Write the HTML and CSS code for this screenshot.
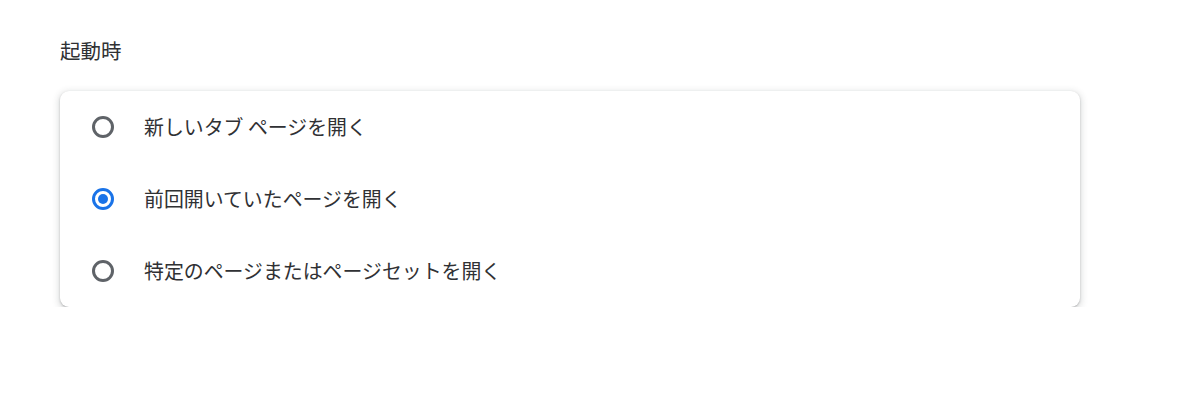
FILE: index.html
```html
<!DOCTYPE html>
<html lang="ja">
<head>
    <meta charset="UTF-8">
    <meta name="viewport" content="width=device-width, initial-scale=1.0">
    <title>起動時</title>
    <link rel="stylesheet" href="styles.css">
</head>
<body>

<div class="section">
    <h2 class="section-title">起動時</h2>

    <div class="card">
        <label class="option">
            <span class="radio"></span>
            <span class="option-label">新しいタブ ページを開く</span>
        </label>
        <label class="option">
            <span class="radio checked"></span>
            <span class="option-label">前回開いていたページを開く</span>
        </label>
        <label class="option">
            <span class="radio"></span>
            <span class="option-label">特定のページまたはページセットを開く</span>
        </label>
    </div>
</div>

</body>
</html>
```

FILE: styles.css
```css
body {
    font-family: "Noto Sans CJK JP", "Noto Sans", sans-serif;
    background-color: #ffffff;
    color: #202124;
    margin: 0;
    padding: 0;
}
.section {
    width: 1020px;
    padding: 36px 0 0 60px;
}
.section-title {
    font-size: 20.5px;
    font-weight: normal;
    line-height: 28px;
    margin: 0 0 27px 0;
    color: #303134;
}
.card {
    background-color: #ffffff;
    border-radius: 9px;
    box-shadow: 0 1px 2px 0 rgba(60, 64, 67, 0.3), 0 2px 6px 2px rgba(60, 64, 67, 0.15);
}
.option {
    display: flex;
    align-items: center;
    height: 72px;
    padding-left: 32px;
}
.radio {
    width: 16px;
    height: 16px;
    border: 3px solid #5f6368;
    border-radius: 50%;
    box-sizing: content-box;
    position: relative;
    flex-shrink: 0;
}
.radio.checked {
    border-color: #1a73e8;
}
.radio.checked::after {
    content: "";
    position: absolute;
    left: 3px;
    top: 3px;
    width: 10px;
    height: 10px;
    border-radius: 50%;
    background-color: #1a73e8;
}
.option-label {
    margin-left: 30px;
    font-size: 19.9px;
    line-height: 28px;
    color: #303134;
}
```
